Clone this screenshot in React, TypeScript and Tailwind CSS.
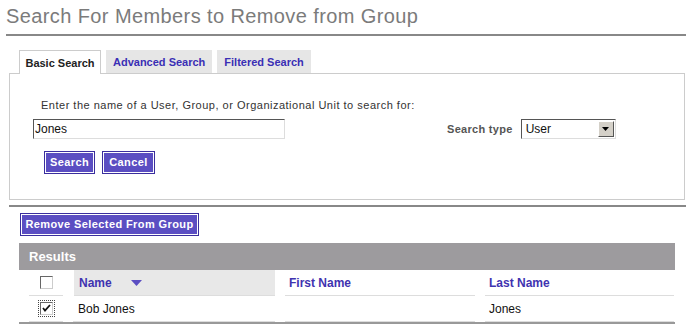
import React from "react";

const TABS = [
  { label: "Basic Search", active: true },
  { label: "Advanced Search", active: false },
  { label: "Filtered Search", active: false },
];

function PurpleButton({ label, className = "" }: { label: string; className?: string }) {
  return (
    <button
      className={`h-[23px] border border-[#3a2e9e] bg-[#5b4ec2] p-0 text-[11px] font-bold tracking-[0.4px] text-white ${className}`}
    >
      <span className="flex h-full w-full items-center justify-center border border-white">{label}</span>
    </button>
  );
}

function CheckBox({ checked }: { checked?: boolean }) {
  return (
    <div className={checked ? "border border-dotted border-[#444] p-[1px]" : "p-[2px]"}>
      <div className="flex h-[13px] w-[13px] items-center justify-center border border-t-[#666] border-l-[#666] border-b-[#ccc] border-r-[#ccc] bg-white">
        {checked && (
          <svg width="9" height="9" viewBox="0 0 9 9">
            <path d="M1 4 L3 6.5 L8 1" stroke="#111" strokeWidth="1.8" fill="none" />
          </svg>
        )}
      </div>
    </div>
  );
}

export default function App() {
  return (
    <div className="h-[334px] w-[692px] overflow-hidden bg-white font-['Liberation_Sans',Arial,sans-serif]">
      {/* Title */}
      <div className="mx-[6px] h-[36px] border-b-2 border-[#888] pt-[2px]">
        <h1 className="text-[20px] leading-[28px] tracking-[0.4px] text-[#7b7b7b]">
          Search For Members to Remove from Group
        </h1>
      </div>

      {/* Tabs */}
      <div className="ml-[19px] mt-[14px] flex gap-[5px]">
        {TABS.map(t => (
          <div
            key={t.label}
            className={
              t.active
                ? "relative z-10 mb-[-1px] flex h-[24px] w-[82px] items-center justify-center border border-b-0 border-[#ccc] bg-white pt-[2px] text-[11px] font-bold text-[#222]"
                : "flex h-[23px] items-center bg-[#e6e6e6] px-[7px] pt-[2px] text-[11px] font-bold text-[#3a2fb5]"
            }
          >
            {t.label}
          </div>
        ))}
      </div>

      {/* Search panel */}
      <div className="ml-[9px] h-[127px] w-[676px] border border-[#ccc]">
        <p className="ml-[31px] mt-[24px] text-[11px] leading-[14px] tracking-[0.5px] text-[#333]">
          Enter the name of a User, Group, or Organizational Unit to search for:
        </p>
        <div className="mt-[7px] flex items-center">
          <div className="ml-[23px] flex h-[20px] w-[252px] items-center border border-t-[#555] border-l-[#555] border-b-[#ddd] border-r-[#ddd] pl-[1px] text-[12px] text-[#111]">
            Jones
          </div>
          <span className="ml-[162px] text-[11px] font-bold tracking-[0.3px] text-[#555]">Search type</span>
          <div className="ml-[8px] flex h-[20px] w-[95px] items-center border border-t-[#555] border-l-[#555] border-b-[#ddd] border-r-[#ddd]">
            <span className="flex-1 pl-[4px] text-[12px] text-[#111]">User</span>
            <div className="mr-[1px] flex h-[16px] w-[16px] items-center justify-center border border-t-[#fff] border-l-[#fff] border-b-[#555] border-r-[#555] bg-[#d4d0c8]">
              <svg width="7" height="4" viewBox="0 0 7 4">
                <path d="M0 0 H7 L3.5 4 Z" fill="#000" />
              </svg>
            </div>
          </div>
        </div>
        <div className="ml-[34px] mt-[12px] flex gap-[7px]">
          <PurpleButton label="Search" className="w-[51px]" />
          <PurpleButton label="Cancel" className="w-[53px]" />
        </div>
      </div>

      {/* Divider */}
      <div className="ml-[9px] mt-[5px] h-[2px] w-[677px] bg-[#888]" />

      {/* Remove button */}
      <div className="ml-[20px] mt-[6px] flex">
        <PurpleButton label="Remove Selected From Group" className="w-[179px] tracking-[0.2px]" />
      </div>

      {/* Results */}
      <div className="ml-[19px] mt-[7px] w-[656px]">
        <div className="flex h-[27px] items-center bg-[#9d9b9e] pl-[10px] text-[13px] font-bold text-white">
          Results
        </div>
        <div className="grid grid-cols-[34px_202px_190px_189px] gap-x-[10px] pl-[10px] [&>*:nth-child(2)]:ml-[1px]">
          <div className="flex h-[26px] items-center justify-center border-b border-[#ddd]">
            <CheckBox />
          </div>
          <div className="flex h-[26px] items-center border-b border-[#ddd] bg-[#e8e8e8] pl-[5px] text-[12px] font-bold text-[#3f33b0]">
            Name
            <svg className="ml-[19px]" width="11" height="6" viewBox="0 0 11 6">
              <path d="M0 0 H11 L5.5 6 Z" fill="#5b4ec2" />
            </svg>
          </div>
          <div className="flex h-[26px] items-center border-b border-[#ddd] pl-[4px] text-[12px] font-bold text-[#3f33b0]">
            First Name
          </div>
          <div className="flex h-[26px] items-center border-b border-[#ddd] pl-[4px] text-[12px] font-bold text-[#3f33b0]">
            Last Name
          </div>

          <div className="flex h-[26px] items-center justify-center border-b border-[#ddd]">
            <CheckBox checked />
          </div>
          <div className="flex h-[26px] items-center border-b border-[#ddd] pl-[5px] text-[12px] text-[#111]">
            Bob Jones
          </div>
          <div className="h-[26px] border-b border-[#ddd]" />
          <div className="flex h-[26px] items-center border-b border-[#ddd] pl-[4px] text-[12px] text-[#111]">
            Jones
          </div>
        </div>
        <div className="h-[2px] bg-[#999]" />
      </div>
    </div>
  );
}
